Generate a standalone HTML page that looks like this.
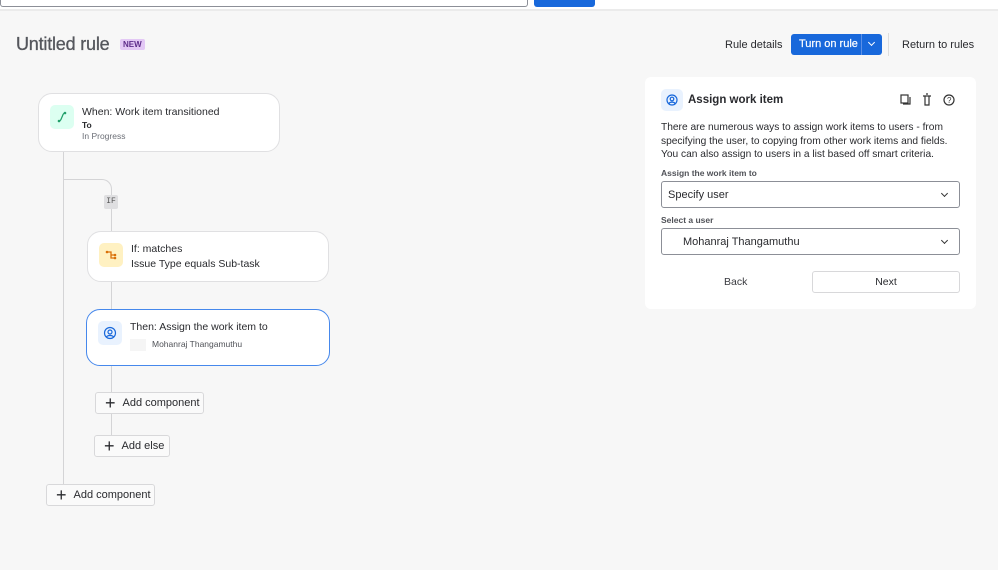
<!DOCTYPE html>
<html><head><style>
*{box-sizing:border-box;margin:0;padding:0}
body{width:998px;height:570px;background:#f7f7f7;font-family:"Liberation Sans",sans-serif;color:#292a2e;position:relative;overflow:hidden}
.abs{position:absolute}
.top{left:0;top:0;width:998px;height:11px;background:#fff;border-bottom:2px solid #ebebeb}
.card{background:#fff;border:1px solid #e0e0e2;border-radius:14px;position:absolute}
.ico{position:absolute;width:24px;height:24px;border-radius:5px}
.line{position:absolute;background:#d4d4d6}
.btn{position:absolute;background:#fafafa;border:1px solid #d8d8da;border-radius:3px;font-size:11px;height:22px;display:flex;align-items:center;padding-left:9px}
.btn span{font-size:18px;margin-right:7px;font-weight:300;line-height:18px}
.sel{position:absolute;left:16px;width:299px;height:27px;border:1px solid #8c8f97;border-radius:3px;font-size:11px;display:flex;align-items:center;padding-left:6px}
.sel:after{content:"";position:absolute;right:12px;top:9px;width:4px;height:4px;border-right:1.5px solid #333;border-bottom:1.5px solid #333;transform:rotate(45deg)}
</style></head><body>
<div class="abs top"></div>
<div class="abs" style="left:0;top:0;width:528px;height:7px;border:1px solid #8c8f97;border-top:none;border-radius:0 0 3px 3px;background:#fff"></div>
<div class="abs" style="left:534px;top:0;width:61px;height:7px;background:#1868db;border-radius:0 0 3px 3px"></div>
<div class="abs" style="left:16px;top:34px;font-size:18px;color:#55575d;-webkit-text-stroke:0.3px #55575d;letter-spacing:-0.2px">Untitled rule</div>
<div class="abs" style="left:120px;top:39px;background:#e3c8f5;color:#5e2d8a;font-size:8px;font-weight:bold;padding:1px 3px;border-radius:2px">NEW</div>
<div class="abs" style="left:725px;top:39px;font-size:11px">Rule details</div>
<div class="abs" style="left:791px;top:34px;width:91px;height:21px;background:#1868db;border-radius:3px;color:#fff;font-size:11px;line-height:21px;padding-left:8px;-webkit-text-stroke:0.2px #fff">Turn on rule<span style="position:absolute;left:70px;top:0;width:1px;height:21px;background:#5b8fe6"></span><span style="position:absolute;left:78px;top:6px;width:5px;height:5px;border-right:1.5px solid #fff;border-bottom:1.5px solid #fff;transform:rotate(45deg)"></span></div>
<div class="abs" style="left:888px;top:33px;width:1px;height:23px;background:#ddd"></div>
<div class="abs" style="left:902px;top:39px;font-size:11px">Return to rules</div>

<div class="line" style="left:63px;top:151px;width:1px;height:334px"></div>
<div class="line" style="left:63px;top:179px;width:36px;height:1px"></div>
<div class="abs" style="left:98px;top:179px;width:14px;height:14px;border-top:1px solid #d4d4d6;border-right:1px solid #d4d4d6;border-radius:0 10px 0 0"></div>
<div class="line" style="left:111px;top:190px;width:1px;height:260px"></div>
<div class="abs" style="left:104px;top:195px;width:14px;height:14px;background:#dfdfe1;border-radius:2px;font-size:8px;color:#555;text-align:center;line-height:14px;font-family:'Liberation Mono',monospace">IF</div>

<div class="card" style="left:38px;top:93px;width:242px;height:59px">
<div class="ico" style="left:11px;top:11px;background:#dcfff1"><svg width="24" height="24"><path d="M9 16c2 0 2-2 3-4s1-4 3-4" stroke="#22a06b" stroke-width="1.3" fill="none"/><circle cx="9" cy="16" r="1.3" fill="#22a06b"/><circle cx="15" cy="8" r="1.3" fill="#22a06b"/></svg></div>
<div class="abs" style="left:43px;top:12px;font-size:10.5px">When: Work item transitioned</div>
<div class="abs" style="left:43px;top:26px;font-size:8.5px;font-weight:bold">To</div>
<div class="abs" style="left:43px;top:37px;font-size:8.5px;color:#6b6e76">In Progress</div>
</div>

<div class="card" style="left:87px;top:231px;width:242px;height:51px">
<div class="ico" style="left:11px;top:11px;background:#fff1c2"><svg width="24" height="24"><path d="M8 9h4v6h4M12 12h4" stroke="#d97008" stroke-width="1.3" fill="none"/><circle cx="8" cy="9" r="1.3" fill="#d97008"/><circle cx="16" cy="15" r="1.3" fill="#d97008"/><circle cx="16" cy="12" r="1.3" fill="#d97008"/></svg></div>
<div class="abs" style="left:43px;top:11px;font-size:10.5px">If: matches</div>
<div class="abs" style="left:43px;top:26px;font-size:10.5px">Issue Type equals Sub-task</div>
</div>

<div class="card" style="left:86px;top:309px;width:244px;height:57px;border:1.5px solid #4688ec">
<div class="ico" style="left:11px;top:11px;background:#e9f2fe"><svg width="24" height="24"><circle cx="12" cy="12" r="5.5" stroke="#1868db" stroke-width="1.2" fill="none"/><circle cx="12" cy="11" r="2" stroke="#1868db" stroke-width="1.2" fill="none"/><path d="M8.5 16c1-2 6-2 7 0" stroke="#1868db" stroke-width="1.2" fill="none"/></svg></div>
<div class="abs" style="left:43px;top:11px;font-size:10.5px">Then: Assign the work item to</div>
<div class="abs" style="left:43px;top:29px;width:16px;height:12px;background:#f5f5f5"></div>
<div class="abs" style="left:65px;top:29px;font-size:8.5px;color:#505258">Mohanraj Thangamuthu</div>
</div>

<div class="btn" style="left:95px;top:392px;width:109px"><span>+</span>Add component</div>
<div class="btn" style="left:94px;top:435px;width:76px"><span>+</span>Add else</div>
<div class="btn" style="left:46px;top:484px;width:109px"><span>+</span>Add component</div>

<div class="abs" style="left:645px;top:77px;width:331px;height:232px;background:#fff;border-radius:6px">
<div class="ico" style="left:16px;top:12px;width:22px;height:22px;background:#e9f2fe"><svg width="22" height="22"><circle cx="11" cy="11" r="5" stroke="#1868db" stroke-width="1.2" fill="none"/><circle cx="11" cy="10" r="1.8" stroke="#1868db" stroke-width="1.2" fill="none"/><path d="M8 14.5c1-1.8 5-1.8 6 0" stroke="#1868db" stroke-width="1.2" fill="none"/></svg></div>
<div class="abs" style="left:43px;top:17px;font-size:11.5px;font-weight:bold">Assign work item</div>
<svg class="abs" style="left:254px;top:16px" width="60" height="14"><rect x="2" y="2" width="7" height="8" stroke="#333" fill="none" stroke-width="1.2"/><path d="M4 11h7V4" stroke="#333" fill="none" stroke-width="1.2"/><path d="M24 3h8M26 3v9h4V3M27 1h2" stroke="#333" fill="none" stroke-width="1.2"/><circle cx="50" cy="7" r="5" stroke="#333" fill="none" stroke-width="1.2"/><text x="48" y="10" font-size="8" fill="#333" font-family="Liberation Sans">?</text></svg>
<div class="abs" style="left:16px;top:44px;width:305px;font-size:10.2px;line-height:13.5px">There are numerous ways to assign work items to users - from specifying the user, to copying from other work items and fields. You can also assign to users in a list based off smart criteria.</div>
<div class="abs" style="left:16px;top:91px;font-size:8.5px;font-weight:bold;color:#505258">Assign the work item to</div>
<div class="sel" style="top:104px">Specify user</div>
<div class="abs" style="left:16px;top:138px;font-size:8.5px;font-weight:bold;color:#505258">Select a user</div>
<div class="sel" style="top:151px;padding-left:21px">Mohanraj Thangamuthu</div>
<div class="abs" style="left:79px;top:199px;font-size:10.5px;color:#3a3b40">Back</div>
<div class="abs" style="left:167px;top:194px;width:148px;height:22px;border:1px solid #d8d8da;border-radius:3px;font-size:10.5px;text-align:center;line-height:20px">Next</div>
</div>
</body></html>
